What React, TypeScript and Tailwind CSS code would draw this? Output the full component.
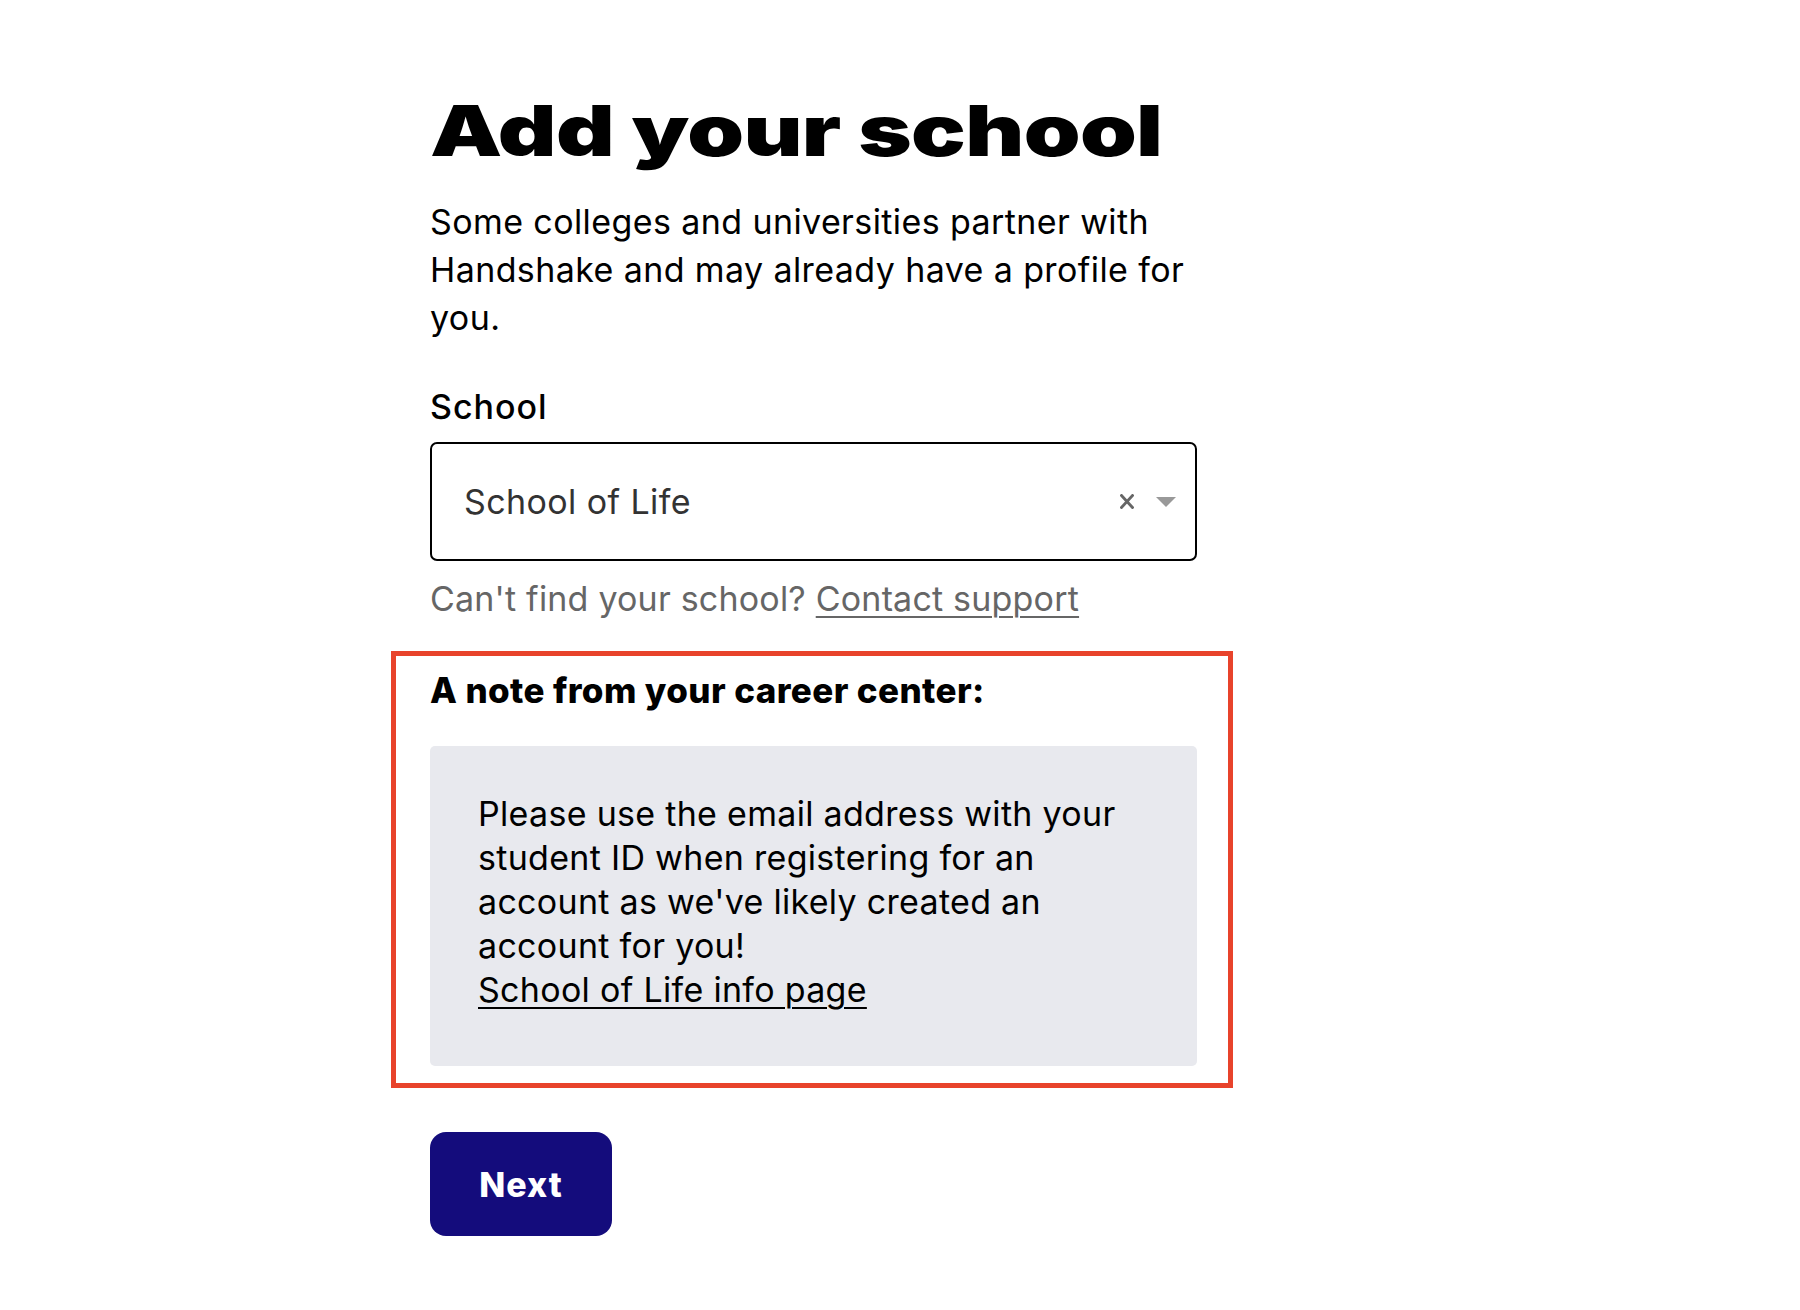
import { useState } from "react"

const sans = "font-['Inter','Liberation_Sans',sans-serif]"

function ClearIcon() {
  return (
    <svg width="14" height="15" viewBox="0 0 14 15" className="text-[#666]">
      <path d="M1.5 1.5 L12.5 13.5 M12.5 1.5 L1.5 13.5" stroke="currentColor" strokeWidth="2.8" strokeLinecap="square" />
    </svg>
  )
}

function CaretIcon() {
  return (
    <svg width="20" height="10" viewBox="0 0 20 10">
      <path d="M0 0 H20 L10 10 Z" fill="#999" />
    </svg>
  )
}

export default function App() {
  const [school, setSchool] = useState("School of Life")

  return (
    <div className={`min-h-[1310px] w-full bg-white text-black ${sans}`}>
      <div className="ml-[430px] w-[767px] pt-[95px]">
        {/* Header */}
        <h1 className="inline-block origin-left scale-x-[1.3] text-[70px] leading-[72px] font-black tracking-[-0.5px]">
          Add your school
        </h1>
        <p className="mt-[31px] text-[34px] leading-[48px] tracking-[0.4px]">
          Some colleges and universities partner with Handshake and may already have a profile for you.
        </p>

        {/* School picker */}
        <label className="mt-[45px] block text-[34px] leading-[40px] font-medium tracking-[1px]">School</label>
        <div className="mt-[15px] flex h-[119px] items-center rounded-[7px] border-2 border-black pl-8 pr-[19px]">
          <span className="flex-1 text-[34px] leading-[40px] tracking-[0.4px] text-[#333]">{school}</span>
          <button onClick={() => setSchool("")} className="mr-[22px] flex items-center" aria-label="Clear">
            <ClearIcon />
          </button>
          <CaretIcon />
        </div>
        <p className="mt-[14px] text-[34px] leading-[48px] tracking-[0.2px] text-[#666]">
          Can't find your school?{" "}
          <a href="#" className="underline underline-offset-[5px] decoration-2">
            Contact support
          </a>
        </p>

        {/* Career center note */}
        <div className="mt-[28px] ml-[-39px] mr-[-36px] border-[5px] border-[#e8432b] pt-[10px] pr-[31px] pb-[17px] pl-[34px]">
          <h2 className="text-[35px] leading-[48px] font-extrabold tracking-[0.4px]">A note from your career center:</h2>
          <div className="mt-[32px] rounded-[5px] bg-[#e8e9ee] px-12 pt-[46px] pb-[54px]">
            <p className="text-[34px] leading-[44px] tracking-[0.3px]">
              Please use the email address with your student ID when registering for an account as we've likely
              created an account for you!
            </p>
            <a href="#" className="block text-[34px] leading-[44px] tracking-[0.3px] underline underline-offset-[5px] decoration-2">
              School of Life info page
            </a>
          </div>
        </div>

        <button className="mt-[44px] flex h-[104px] w-[182px] items-center justify-center rounded-[16px] bg-[#140c7c] text-[34px] font-extrabold tracking-[1px] text-white">
          Next
        </button>
      </div>
    </div>
  )
}
